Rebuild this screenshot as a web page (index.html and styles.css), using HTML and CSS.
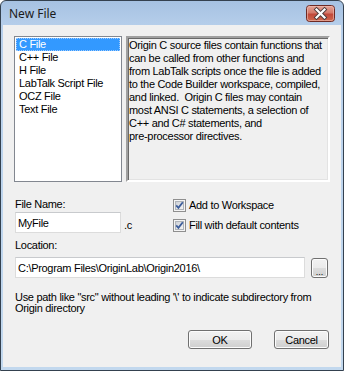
FILE: index.html
```html
<!DOCTYPE html>
<html lang="en">
<head>
    <meta charset="UTF-8">
    <title>New File</title>
    <link rel="stylesheet" href="styles.css">
</head>
<body>
    <div class="window">
        <div class="titlebar">
            <span class="title">New File</span>
            <span class="close">
                <svg width="29" height="17" viewBox="0 0 29 17">
                    <defs>
                        <linearGradient id="red" x1="0" y1="0" x2="0" y2="1">
                            <stop offset="0" stop-color="#e6a597"/>
                            <stop offset="0.45" stop-color="#d47a6b"/>
                            <stop offset="0.55" stop-color="#c2493a"/>
                            <stop offset="1" stop-color="#d06a4f"/>
                        </linearGradient>
                    </defs>
                    <rect x="0.5" y="0.5" width="28" height="16" rx="3" fill="url(#red)" stroke="#6e2a24"/>
                    <rect x="1.5" y="1.5" width="26" height="14" rx="2" fill="none" stroke="#f0c2b8" stroke-opacity="0.6"/>
                    <path d="M10.5 4.5 L18.5 12.5 M18.5 4.5 L10.5 12.5" stroke="#4a3a3a" stroke-width="4" stroke-linecap="square"/>
                    <path d="M10.5 4.5 L18.5 12.5 M18.5 4.5 L10.5 12.5" stroke="#ffffff" stroke-width="2.2" stroke-linecap="square"/>
                </svg>
            </span>
        </div>
        <div class="client">
            <div class="top">
                <ul class="filelist">
                    <li class="selected">C File</li>
                    <li>C++ File</li>
                    <li>H File</li>
                    <li>LabTalk Script File</li>
                    <li>OCZ File</li>
                    <li>Text File</li>
                </ul>
                <div class="desc">Origin C source files contain functions that can be called from other functions and from LabTalk scripts once the file is added to the Code Builder workspace, compiled, and linked.&nbsp; Origin C files may contain most ANSI C statements, a selection of C++ and C# statements, and<br>pre-processor directives.</div>
            </div>

            <div class="form">
                <div class="name-col">
                    <label class="label" for="filename">File Name:</label>
                    <div class="name-line">
                        <input class="textbox name" id="filename" type="text" value="MyFile">
                        <span class="ext">.c</span>
                    </div>
                </div>
                <div class="checks">
                    <label class="check">
                        <span class="box">
                            <svg width="13" height="13" viewBox="0 0 13 13">
                                <defs>
                                    <linearGradient id="cb" x1="0" y1="0" x2="1" y2="1">
                                        <stop offset="0" stop-color="#cbcfd5"/>
                                        <stop offset="1" stop-color="#f6f6f6"/>
                                    </linearGradient>
                                </defs>
                                <rect x="0.5" y="0.5" width="12" height="12" fill="#f4f4f4" stroke="#8f8f8f"/>
                                <rect x="2.5" y="2.5" width="8" height="8" fill="url(#cb)" stroke="#aeb3b9"/>
                                <path d="M3.2 6.4 L5.4 8.8 L9.8 3.2" fill="none" stroke="#3c5d9b" stroke-width="1.8"/>
                            </svg>
                        </span>
                        Add to Workspace
                    </label>
                    <label class="check">
                        <span class="box">
                            <svg width="13" height="13" viewBox="0 0 13 13">
                                <rect x="0.5" y="0.5" width="12" height="12" fill="#f4f4f4" stroke="#8f8f8f"/>
                                <rect x="2.5" y="2.5" width="8" height="8" fill="url(#cb)" stroke="#aeb3b9"/>
                                <path d="M3.2 6.4 L5.4 8.8 L9.8 3.2" fill="none" stroke="#3c5d9b" stroke-width="1.8"/>
                            </svg>
                        </span>
                        Fill with default contents
                    </label>
                </div>
            </div>

            <label class="label loc-label" for="location">Location:</label>
            <div class="loc-line">
                <input class="textbox path" id="location" type="text" value="C:\Program Files\OriginLab\Origin2016\">
                <button class="btn browse">...</button>
            </div>

            <p class="hint">Use path like "src" without leading '\' to indicate subdirectory from Origin directory</p>

            <div class="actions">
                <button class="btn ok">OK</button>
                <button class="btn cancel">Cancel</button>
            </div>
        </div>
    </div>
</body>
</html>
```

FILE: styles.css
```css
body {
    margin: 0;
    font-family: "Liberation Sans", Arial, sans-serif;
    font-size: 11px;
    letter-spacing: -0.3px;
    color: #000;
}
.window {
    width: 344px;
    height: 371px;
    box-sizing: border-box;
    border: 1px solid #34414f;
    border-radius: 6px 6px 0 0;
    background: linear-gradient(#a6c2e2, #b9d1ec 30px, #c2d8ee);
    padding: 0 2px 3px;
    display: flex;
    flex-direction: column;
}
.titlebar {
    height: 24px;
    display: flex;
    justify-content: space-between;
    align-items: flex-start;
    padding: 0 6px 0 6px;
}
.title {
    font-family: "Noto Sans", "Open Sans", sans-serif;
    font-size: 12px;
    letter-spacing: 0;
    line-height: 26px;
    color: #1b1b1b;
}
.close {
    margin-top: 4px;
    height: 17px;
}
.close svg {
    display: block;
}
.client {
    flex: 1;
    background-color: #f0f0f0;
    padding: 11px 11px 0 11px;
}
.top {
    display: flex;
    gap: 4px;
    height: 146px;
}
.filelist {
    width: 108px;
    box-sizing: border-box;
    margin: 0;
    padding: 1px;
    list-style: none;
    background-color: #fff;
    border: 1px solid #828790;
}
.filelist li {
    height: 13px;
    line-height: 13px;
    padding-left: 3px;
    white-space: nowrap;
}
.filelist li.selected {
    background-color: #3399ff;
    color: #fff;
    outline: 1px dotted #9ccaff;
    outline-offset: -1px;
}
.desc {
    flex: 1;
    box-sizing: border-box;
    border: 2px solid;
    border-color: #a0a0a0 #fff #fff #a0a0a0;
    box-shadow: inset 1px 1px 0 #696969, inset -1px -1px 0 #e3e3e3;
    padding: 1px 1px;
    line-height: 13px;
}
.form {
    margin-top: 16px;
    padding-left: 1px;
    display: grid;
    grid-template-columns: 158px 1fr;
}
.label {
    display: block;
    line-height: 13px;
}
.name-line {
    margin-top: 1px;
    display: flex;
    align-items: center;
}
.textbox {
    box-sizing: border-box;
    height: 21px;
    border: 1px solid #dcdcdc;
    border-top-color: #c8cacd;
    background-color: #fff;
    padding: 0 2px;
    margin: 0;
    font-family: "Liberation Sans", Arial, sans-serif;
    font-size: 11px;
    letter-spacing: -0.3px;
    color: #000;
    outline: none;
}
.name {
    width: 106px;
}
.ext {
    margin-left: 3px;
    margin-top: 5px;
}
.checks {
    padding-top: 1px;
    display: flex;
    flex-direction: column;
    gap: 7px;
}
.check {
    display: flex;
    align-items: center;
    gap: 3px;
    height: 13px;
    line-height: 13px;
}
.box svg {
    display: block;
}
.loc-label {
    margin-top: 6px;
    padding-left: 1px;
}
.loc-line {
    margin-top: 5px;
    padding-left: 1px;
    display: flex;
    align-items: center;
    gap: 6px;
}
.path {
    width: 290px;
}
.btn {
    box-sizing: border-box;
    border: 1px solid #707070;
    border-radius: 3px;
    background: linear-gradient(#f2f2f2, #ebebeb 50%, #dddddd 50%, #cfcfcf);
    box-shadow: inset 0 0 0 1px #fcfcfc;
    font-family: "Liberation Sans", Arial, sans-serif;
    font-size: 11px;
    letter-spacing: -0.3px;
    color: #000;
    padding: 0;
    margin: 0;
}
.browse {
    width: 17px;
    height: 20px;
    line-height: 18px;
    font-size: 9px;
    letter-spacing: 0;
    padding-top: 4px;
}
.hint {
    margin: 14px 0 0 1px;
    line-height: 11px;
}
.actions {
    margin-top: 16px;
    display: flex;
    justify-content: flex-end;
    gap: 22px;
    padding-right: 1px;
}
.ok {
    width: 64px;
    height: 19px;
}
.cancel {
    width: 55px;
    height: 19px;
}
```
